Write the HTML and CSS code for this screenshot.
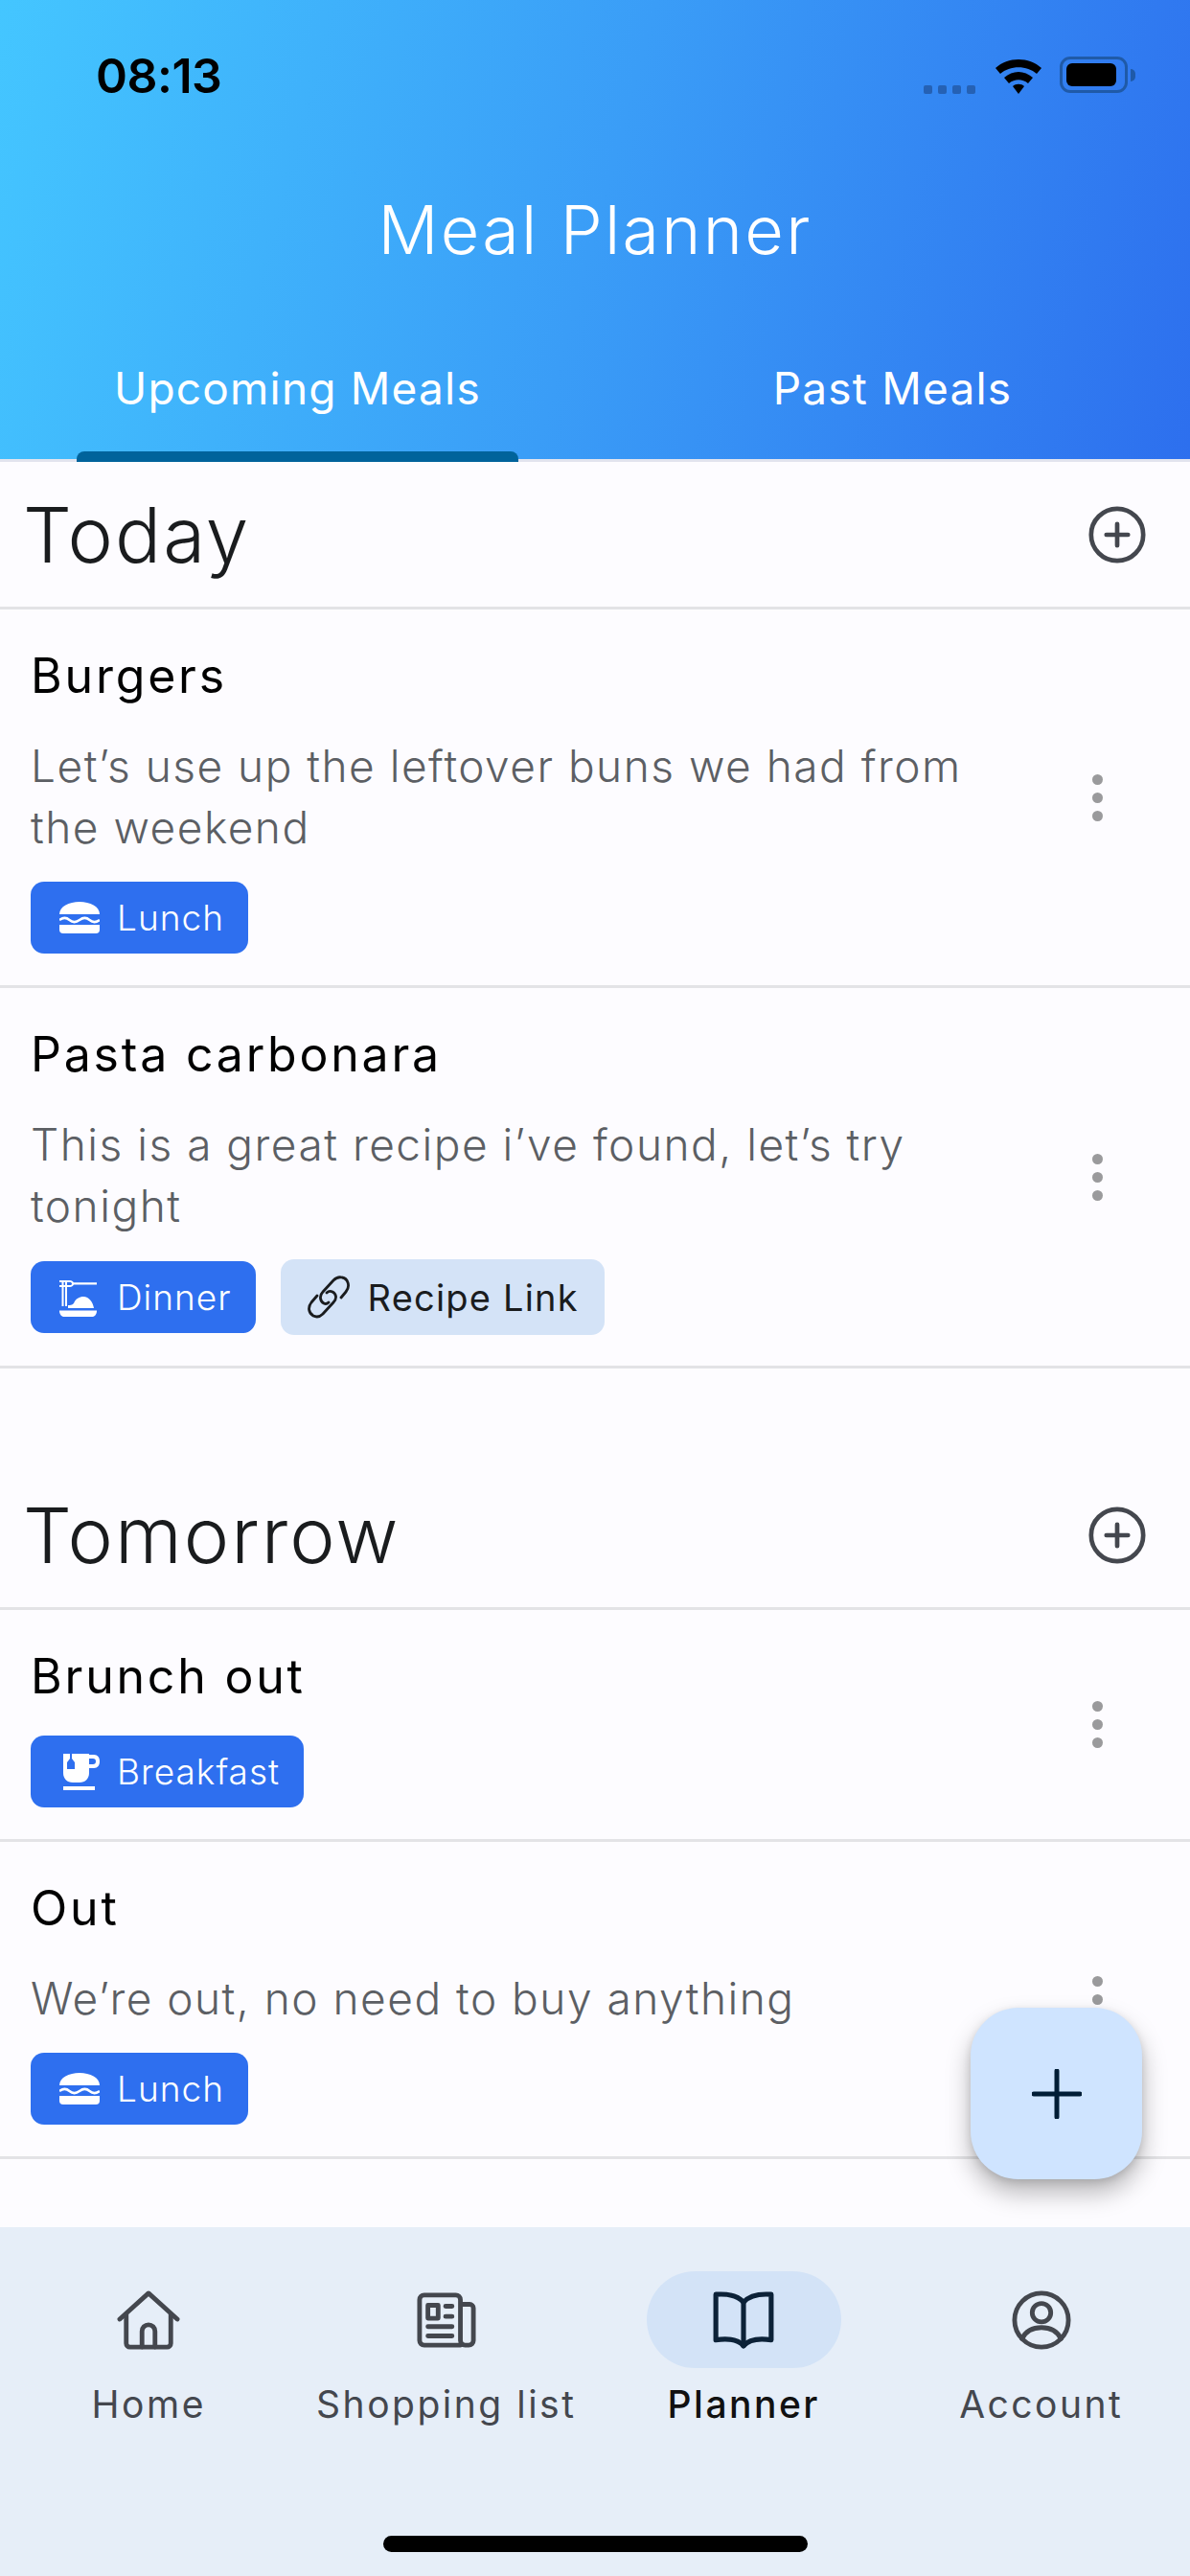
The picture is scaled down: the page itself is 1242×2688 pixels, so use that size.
FILE: index.html
```html
<!DOCTYPE html>
<html lang="en">
<head>
  <meta charset="UTF-8" />
  <title>Meal Planner</title>
  <link rel="stylesheet" href="styles.css">
</head>
<body>
  <div class="screen">
    <header class="top">
      <div class="status">
        <span class="clock">08:13</span>
        <div class="status-icons">
          <div class="signal"><i></i><i></i><i></i><i></i></div>
          <svg class="wifi" viewBox="0 0 52 40"><path d="M2 13C15 1 37 1 50 13L45 19C35 10 17 10 7 19Z"/><path d="M11 23C20 15 32 15 41 23L36 29C30 24 22 24 16 29Z"/><path d="M20 32C23 29 29 29 32 32L26 40Z"/></svg>
          <div class="battery"><div class="battery-fill"></div></div>
          <div class="battery-nub"></div>
        </div>
      </div>
      <h1>Meal Planner</h1>
      <nav class="tabs">
        <a class="tab active"><span>Upcoming Meals</span><i class="tab-line"></i></a>
        <a class="tab"><span>Past Meals</span><i class="tab-line"></i></a>
      </nav>
    </header>

    <main class="content">
      <section>
        <div class="day">
          <h2>Today</h2>
          <svg class="add" viewBox="0 0 64 64"><circle cx="32" cy="32" r="29"/><path d="M32 20V44M20 32H44"/></svg>
        </div>
        <div class="meal">
          <div class="meal-body">
            <h3>Burgers</h3>
            <p>Let’s use up the leftover buns we had from<br>the weekend</p>
            <div class="tags">
              <span class="tag">
                <svg class="ic-lunch" viewBox="0 0 42 33"><path d="M0 13C0 5 10 0 21 0S42 5 42 13Z"/><path class="wave" d="M0 19C4 16 7 16 10.500 19S17 22 21 19S28 16 31.500 19S38 22 42 19"/><path d="M0 24H42V29A4 4 0 0 1 38 33H4A4 4 0 0 1 0 29Z"/></svg>
                Lunch
              </span>
            </div>
          </div>
          <div class="dots"><i></i><i></i><i></i></div>
        </div>
        <div class="meal">
          <div class="meal-body">
            <h3>Pasta carbonara</h3>
            <p>This is a great recipe i’ve found, let’s try<br>tonight</p>
            <div class="tags">
              <span class="tag">
                <svg class="ic-dinner" viewBox="0 0 42 40"><path d="M0 2H11C13 2 14 3 15 4.300H39V6.500H15C14 8 13 9 11 9H8V29H6V9H4.500V29H2.500V9H0V7H2.500V4H0ZM4.500 4V7H6V4ZM8 4V7H11C12 7 13 6.500 13 5.500S12 4 11 4Z"/><path d="M9 31V28C11 28 13 28 15 26C17 21 21 19 25 19C31 19 35 25 36 31Z"/><path d="M0 33.500H39C39 37.500 37 40 34 40H5C2 40 0 37.500 0 33.500Z"/></svg>
                Dinner
              </span>
              <span class="tag tag-link">
                <svg class="ic-link" viewBox="0 0 46 46"><path d="M36 23L41 17C46 11 43 3 37 2C33 1 30 3 28 5L17 17C13 21 14 27 18 29C20 30 22 29 23 28"/><path d="M11 21L5 28C1 33 2 39 7 42C11 44 15 42 17 40L28 28C32 24 31 19 27 17C25 16 23 16 21 18"/></svg>
                Recipe Link
              </span>
            </div>
          </div>
          <div class="dots"><i></i><i></i><i></i></div>
        </div>
      </section>

      <section class="next-day">
        <div class="day">
          <h2>Tomorrow</h2>
          <svg class="add" viewBox="0 0 64 64"><circle cx="32" cy="32" r="29"/><path d="M32 20V44M20 32H44"/></svg>
        </div>
        <div class="meal">
          <div class="meal-body">
            <h3>Brunch out</h3>
            <div class="tags">
              <span class="tag">
                <svg class="ic-cup" viewBox="0 0 42 38"><path fill-rule="evenodd" d="M4 0H11V5L8 9V16H16V9L13 5V0H31V1H36C40 1 42 4 42 8S40 15 36 15H31V20C31 26 27 30 21 30H14C8 30 4 26 4 20ZM31 5V11H35C37 11 38 10 38 8S37 5 35 5Z"/><rect x="4" y="34" width="33" height="4"/></svg>
                Breakfast
              </span>
            </div>
          </div>
          <div class="dots"><i></i><i></i><i></i></div>
        </div>
        <div class="meal">
          <div class="meal-body">
            <h3>Out</h3>
            <p>We’re out, no need to buy anything</p>
            <div class="tags">
              <span class="tag">
                <svg class="ic-lunch" viewBox="0 0 42 33"><path d="M0 13C0 5 10 0 21 0S42 5 42 13Z"/><path class="wave" d="M0 19C4 16 7 16 10.500 19S17 22 21 19S28 16 31.500 19S38 22 42 19"/><path d="M0 24H42V29A4 4 0 0 1 38 33H4A4 4 0 0 1 0 29Z"/></svg>
                Lunch
              </span>
            </div>
          </div>
          <div class="dots"><i></i><i></i><i></i></div>
        </div>
      </section>
    </main>

    <button class="fab">
      <svg viewBox="0 0 52 52"><path d="M26 2V50M2 26H50"/></svg>
    </button>

    <footer class="bottom">
      <div class="nav-items">
        <a class="nav-item">
          <span class="pill">
            <svg viewBox="0 0 68 64"><path d="M3 31L34 3L65 31"/><path d="M10 26V57A4 4 0 0 0 14 61H54A4 4 0 0 0 58 57V26"/><path d="M27 61V44A7 7 0 0 1 41 44V61"/></svg>
          </span>
          <span class="nav-label">Home</span>
        </a>
        <a class="nav-item">
          <span class="pill">
            <svg viewBox="-2 -2 68 64"><path d="M47 57H8A5 5 0 0 1 3 52V8A5 5 0 0 1 8 3H42A5 5 0 0 1 47 8V52A5 5 0 0 0 52 57H56A5 5 0 0 0 61 52V17A4 4 0 0 0 57 13H47"/><rect x="12" y="14" width="11" height="14"/><path d="M31 15H38M31 26H38M12 37H38M12 47H38"/></svg>
          </span>
          <span class="nav-label">Shopping list</span>
        </a>
        <a class="nav-item active">
          <span class="pill">
            <svg viewBox="0 0 64 60"><path d="M32 12C27 6 18 3 4 4V50C18 48 27 50 32 56C37 50 46 48 60 50V4C46 3 37 6 32 12Z"/><path d="M32 12V56"/></svg>
          </span>
          <span class="nav-label">Planner</span>
        </a>
        <a class="nav-item">
          <span class="pill">
            <svg viewBox="0 0 64 64"><circle cx="32" cy="32" r="29"/><circle cx="32" cy="24" r="10"/><path d="M11 52C16 42 24 40 32 40S48 42 53 52"/></svg>
          </span>
          <span class="nav-label">Account</span>
        </a>
      </div>
      <div class="home-bar"></div>
    </footer>
  </div>
</body>
</html>
```

FILE: styles.css
```css
* { box-sizing: border-box; }
html, body { margin: 0; padding: 0; }
body { font-family: "Inter", "Noto Sans", sans-serif; background: #fdfcff; color: #1a1c1e; }
h1, h2, h3, p { margin: 0; font-weight: normal; }

.screen { position: relative; width: 1242px; height: 2688px; display: flex; flex-direction: column; overflow: hidden; }

/* header */
.top { height: 482px; flex: none; background: linear-gradient(105deg, #44c6ff 0%, #3a9df7 50%, #2d6fee 100%); color: #fff; border-bottom: 3px solid #e2e4ee; }
.status { height: 160px; padding: 56px 57px 0 100px; display: flex; justify-content: space-between; align-items: flex-start; }
.clock { font-weight: 600; font-size: 50px; line-height: 46px; color: #000; letter-spacing: -0.5px; }
.status-icons { display: flex; align-items: center; height: 40px; margin-top: 2px; }
.signal { display: flex; gap: 6px; margin: 30px 19px 0 0; }
.signal i { width: 9px; height: 9px; border-radius: 2px; background: #2561b4; }
.wifi { width: 52px; height: 40px; fill: #000; margin-right: 17px; }
.battery { width: 71px; height: 38px; border: 3px solid #1f5aa8; border-radius: 11px; padding: 4px; }
.battery-fill { width: 52px; height: 100%; background: #000; border-radius: 6px; }
.battery-nub { width: 5px; height: 13px; margin-left: 3px; background: #1f5aa8; border-radius: 0 6px 6px 0; }
h1 { height: 160px; text-align: center; font-weight: 300; font-size: 70px; line-height: 160px; letter-spacing: 2.3px; }
.tabs { display: flex; }
.tab { flex: 1; display: flex; flex-direction: column; align-items: center; font-size: 46px; line-height: 60px; letter-spacing: 1.2px; padding-top: 55px; }
.tab span { height: 96px; }
.tab-line { display: block; width: 461px; height: 11px; border-radius: 8px 8px 0 0; }
.tab.active .tab-line { background: #00639b; }

/* list */
.content { flex: 1; min-height: 0; }
.next-day { margin-top: 98px; }
.day { height: 154px; padding: 0 46px 0 24px; display: flex; justify-content: space-between; align-items: center; border-bottom: 3px solid #e3e3e6; }
.day h2 { font-weight: 300; font-size: 80px; line-height: 100px; letter-spacing: 2px; color: #1a1c1e; }
.add { width: 60px; height: 60px; fill: none; stroke: #44474e; stroke-width: 5; stroke-linecap: round; }

.meal { display: flex; align-items: center; padding: 0 0 0 32px; border-bottom: 3px solid #e3e3e6; }
.meal-body { flex: 1; padding: 37px 0 33px; }
.meal h3 { font-size: 50px; line-height: 64px; letter-spacing: 2.8px; font-weight: 400; color: #000; margin-bottom: 30px; }
.meal p { font-size: 46px; line-height: 64px; font-weight: 300; letter-spacing: 1.5px; color: #5c5f64; margin-bottom: 25px; }
.dots { width: 24px; margin-right: 85px; display: flex; flex-direction: column; align-items: center; gap: 8px; }
.dots i { width: 11px; height: 11px; border-radius: 50%; background: #9a9a9c; }

.tags { display: flex; align-items: center; gap: 26px; }
.tag { height: 75px; padding: 0 25px 0 30px; display: inline-flex; align-items: center; gap: 18px; background: #2e6fef; color: #fff; border-radius: 14px; font-size: 37px; font-weight: 300; letter-spacing: 1px; }
.tag svg { fill: #fff; flex: none; width: 42px; }
.tag-link { height: 79px; margin: -1px 0; padding: 0 27px; background: #d4e3f7; color: #1a1c1e; font-size: 38px; font-weight: 400; letter-spacing: 1.2px; }
.ic-lunch { height: 33px; }
.ic-lunch .wave { fill: none; stroke: #fff; stroke-width: 2.500; }
.ic-dinner { height: 40px; }
.ic-cup { height: 38px; }
.tag .ic-link { width: 46px; height: 46px; fill: none; stroke: #1a1c1e; stroke-width: 2.800; stroke-linecap: round; stroke-linejoin: round; }

/* fab */
.fab { position: absolute; left: 1013px; top: 2095px; width: 179px; height: 179px; padding: 0; border: none; border-radius: 50px; background: #cfe4ff; box-shadow: 0 14px 26px rgba(0,0,0,0.28), 0 3px 8px rgba(0,0,0,0.12); display: flex; align-items: center; justify-content: center; }
.fab svg { width: 52px; height: 52px; fill: none; stroke: #001d36; stroke-width: 5; stroke-linecap: round; }

/* bottom nav */
.bottom { height: 364px; flex: none; background: #e6eef8; padding-top: 46px; }
.nav-items { display: flex; }
.nav-item { flex: 1; display: flex; flex-direction: column; align-items: center; color: #44474e; }
.pill { width: 203px; height: 101px; border-radius: 51px; display: flex; align-items: center; justify-content: center; }
.pill svg { width: 66px; height: 62px; fill: none; stroke: #44474e; stroke-width: 5; stroke-linecap: round; stroke-linejoin: round; }
.nav-label { margin-top: 14px; font-size: 39px; line-height: 48px; letter-spacing: 2.500px; }
.nav-item.active { color: #111; font-weight: 500; }
.nav-item.active .pill { background: #d3e3f7; }
.nav-item.active .pill svg { stroke: #0c2238; }
.home-bar { width: 443px; height: 17px; margin: 113px auto 0; border-radius: 9px; background: #000; }
```
